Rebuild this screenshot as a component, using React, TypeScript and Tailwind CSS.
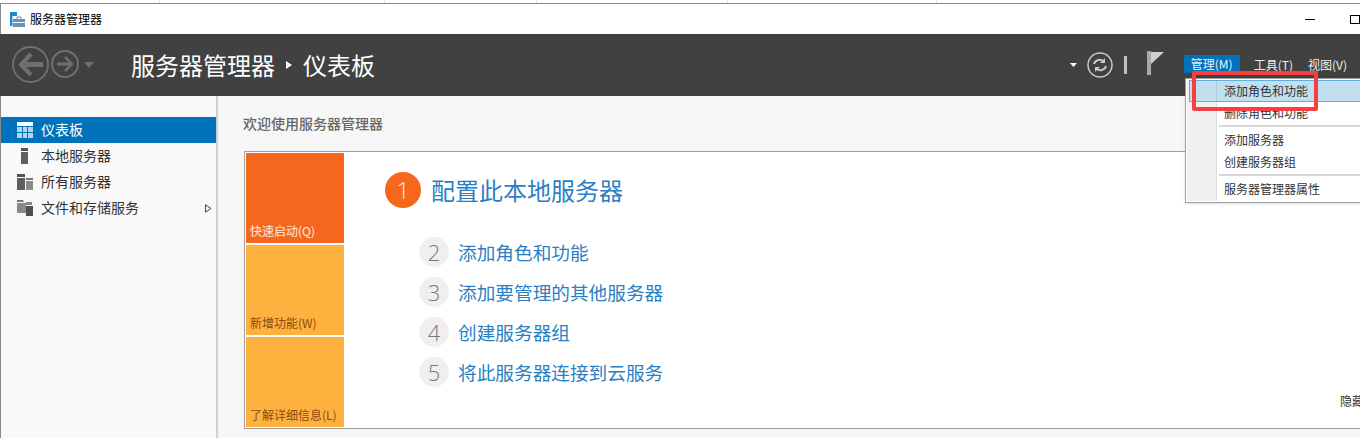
const sideItems = [
  { label: '仪表板', icon: 'dash', active: true },
  { label: '本地服务器', icon: 'local' },
  { label: '所有服务器', icon: 'all' },
  { label: '文件和存储服务', icon: 'files', arrow: true },
];

const steps = [
  { n: 2, label: '添加角色和功能' },
  { n: 3, label: '添加要管理的其他服务器' },
  { n: 4, label: '创建服务器组' },
  { n: 5, label: '将此服务器连接到云服务' },
];

const SideIcon = ({ name }: { name: string }) => {
  if (name === 'dash') {
    return (
      <svg width="16" height="16" viewBox="0 0 16 16" className="block">
        <rect x="0" y="0" width="16" height="4" fill="#ffffff" />
        <rect x="0" y="5" width="5" height="5" fill="#b5d5ec" />
        <rect x="6" y="5" width="4" height="5" fill="#b5d5ec" />
        <rect x="11" y="5" width="5" height="5" fill="#b5d5ec" />
        <rect x="0" y="11" width="5" height="5" fill="#b5d5ec" />
        <rect x="6" y="11" width="4" height="5" fill="#b5d5ec" />
        <rect x="11" y="11" width="5" height="5" fill="#b5d5ec" />
      </svg>
    );
  }
  if (name === 'local') {
    return (
      <svg width="16" height="16" viewBox="0 0 16 16" className="block">
        <rect x="4" y="0" width="7" height="3" fill="#555555" />
        <rect x="4" y="4" width="7" height="12" fill="#5f5f5f" />
      </svg>
    );
  }
  if (name === 'all') {
    return (
      <svg width="16" height="16" viewBox="0 0 16 16" className="block">
        <rect x="0" y="0" width="8" height="3" fill="#555555" />
        <rect x="0" y="4" width="8" height="12" fill="#5f5f5f" />
        <rect x="9" y="4" width="7" height="2" fill="#777777" />
        <rect x="9" y="7" width="7" height="9" fill="#8a8a8a" />
      </svg>
    );
  }
  return (
    <svg width="16" height="16" viewBox="0 0 16 16" className="block">
      <path d="M0 0h6l1 2h-7z" fill="#777777" />
      <rect x="0" y="3" width="9" height="10" fill="#8a8a8a" />
      <path d="M9 2h6v3h-6z" fill="#8a8a8a" />
      <rect x="9" y="6" width="7" height="10" fill="#505050" />
    </svg>
  );
};

const BackIcon = () => (
  <svg width="84" height="42" viewBox="0 0 84 42" className="block" fill="none" stroke="#6f6f6f">
    <circle cx="18.500" cy="20.500" r="17.500" strokeWidth="2" />
    <path d="M9 20.500h22" strokeWidth="5" />
    <path d="M19 10l-10 10.500 10 10.500" strokeWidth="4" />
    <circle cx="53" cy="20" r="13" strokeWidth="2" />
    <path d="M45 20h14" strokeWidth="3" />
    <path d="M53 13l7 7-7 7" strokeWidth="2.500" />
    <path d="M72 18h10l-5 6z" fill="#6f6f6f" stroke="none" />
  </svg>
);

const MenuItem = ({ label, hover }: { label: string; hover?: boolean }) => (
  <div className={hover ? 'ml-[3px] flex h-[22px] items-center border border-[#5fb0de] bg-[#c1dfee] pl-[34px]' : 'flex h-[22px] items-center pl-[38px]'}>
    {label}
  </div>
);

export default function App() {
  return (
    <div
      className="relative flex h-[438px] w-[1360px] flex-col overflow-hidden bg-white text-[12px] text-[#222222]"
      style={{ fontFamily: '"Noto Sans CJK SC", "Noto Sans", sans-serif' }}
    >
      {/* sliver of the page behind the window */}
      <div className="flex h-[3px] bg-white">
        <div className="w-[160px] border-r border-[#dddddd]" />
        <div className="w-[225px] border-r border-[#dddddd]" />
        <div className="w-[152px] border-r border-[#dddddd]" />
        <div className="w-[191px] border-r border-[#dddddd]" />
        <div className="w-[209px] border-r border-[#dddddd]" />
      </div>
      <div className="h-px bg-[#8a8a8a]" />

      {/* title bar */}
      <div className="flex h-[30px] items-center border-l border-[#8a8a8a] pl-[9px]">
        <svg width="15" height="15" viewBox="0 0 15 15" className="block">
          <rect x="0" y="0" width="7" height="4" fill="#1e88d6" />
          <rect x="0" y="4" width="2.500" height="10" fill="#1e88d6" />
          <rect x="3" y="7" width="12" height="8" fill="#6c93b5" />
          <path d="M7 7V5h4v2" fill="none" stroke="#6c93b5" />
          <rect x="3" y="10" width="12" height="1" fill="#ffffff" />
        </svg>
        <span className="ml-[5px] text-[12px] text-black">服务器管理器</span>
        <div className="ml-auto flex items-center">
          <div className="h-px w-[10px] bg-black" />
          <div className="ml-[35px] h-[9px] w-[10px] border border-black" />
        </div>
      </div>

      {/* header */}
      <div className="flex h-[62px] shrink-0 items-center bg-[#414141] pl-[12px] pr-[13px]">
        <BackIcon />
        <span className="ml-[35px] text-[24px] leading-none text-white">服务器管理器</span>
        <svg width="6" height="8" viewBox="0 0 6 8" className="ml-[11px] block">
          <path d="M0 0l6 4-6 4z" fill="#ffffff" />
        </svg>
        <span className="ml-[11px] text-[24px] leading-none text-white">仪表板</span>
        <div className="ml-auto flex items-center">
          <svg width="7" height="4" viewBox="0 0 7 4" className="block">
            <path d="M0 0h7l-3.500 4z" fill="#ffffff" />
          </svg>
          <svg width="26" height="26" viewBox="0 0 26 26" className="ml-[10px] block" fill="none" stroke="#c8c8c8">
            <circle cx="13" cy="13" r="12" strokeWidth="1.500" />
            <path d="M7 12c1-4 7-6 10-2" strokeWidth="2" />
            <path d="M19 14c-1 4-7 6-10 2" strokeWidth="2" />
            <path d="M18 6v5h-5z" fill="#c8c8c8" stroke="none" />
            <path d="M8 20v-5h5z" fill="#c8c8c8" stroke="none" />
          </svg>
          <div className="ml-[11px] h-[18px] w-[3px] bg-[#c0c0c0]" />
          <svg width="18" height="24" viewBox="0 0 18 24" className="mb-[5px] ml-[20px] block">
            <rect x="0" y="0" width="4" height="24" fill="#a8a8a8" />
            <path d="M4 1h13L4 13z" fill="#d0d0d0" />
          </svg>
          <div className="mb-[2px] ml-[19px] flex h-[18px] w-[56px] items-center justify-center bg-[#0072bc] text-[12px] leading-[18px] text-[#e8f2fa]">管理(M)</div>
          <span className="ml-[14px] text-[12px] leading-[18px] text-[#eeeeee]">工具(T)</span>
          <span className="ml-[15px] text-[12px] leading-[18px] text-[#eeeeee]">视图(V)</span>
        </div>
      </div>

      {/* body */}
      <div className="flex min-h-0 flex-1 border-l border-[#8a8a8a]">
        <aside className="w-[217px] shrink-0 border-r-2 border-[#d0d0d0] bg-[#f9f9f9] pt-[21px] text-[14px]">
          {sideItems.map((item) => (
            <div
              key={item.label}
              className={item.active ? 'flex h-[26px] items-center bg-[#0072bc] pl-[16px] text-white' : 'flex h-[26px] items-center pl-[16px] text-[#333333]'}
            >
              <SideIcon name={item.icon} />
              <span className="mb-px ml-[8px]">{item.label}</span>
              {item.arrow && (
                <svg width="7" height="9" viewBox="0 0 7 9" className="ml-auto mr-[4px] block">
                  <path d="M0.500 0.800l5.500 3.700-5.500 3.700z" fill="none" stroke="#444444" />
                </svg>
              )}
            </div>
          ))}
        </aside>

        <main className="min-w-0 flex-1 bg-[#f6f6f6] pl-[26px]">
          <div className="-ml-px flex h-[55px] items-center pb-px text-[14px] font-medium text-[#666666]">欢迎使用服务器管理器</div>
          <div className="flex h-[278px] w-[1200px] border border-[#a0a0a0] bg-white p-px">
            <div className="flex w-[98px] shrink-0 flex-col gap-[2px] text-[12px]">
              <div className="flex h-[90px] items-end bg-[#f6671e] pb-[3px] pl-[4px] text-[#fdeee2]">快速启动(Q)</div>
              <div className="flex h-[90px] items-end bg-[#ffb13f] pb-[3px] pl-[4px] text-[#8a4a0c]">新增功能(W)</div>
              <div className="flex h-[90px] items-end bg-[#ffb13f] pb-[3px] pl-[4px] text-[#8a4a0c]">了解详细信息(L)</div>
            </div>
            <div className="relative flex-1 pl-[41px] pt-[19px]">
              <div className="flex items-center">
                <div className="flex h-[36px] w-[36px] items-center justify-center rounded-full bg-[#f6671e] text-[24px] font-light leading-none text-[#fde6d6]" style={{ fontFamily: '"Open Sans", sans-serif' }}>1</div>
                <span className="ml-[10px] text-[24px] leading-none text-[#2a7fc4]">配置此本地服务器</span>
              </div>
              <div className="ml-[34px] mt-[24px] flex flex-col">
                {steps.map((s) => (
                  <div key={s.n} className="flex h-[40px] items-center">
                    <div className="flex h-[30px] w-[30px] items-center justify-center rounded-full bg-[#efefef] text-[22px] font-light leading-none text-[#777777]" style={{ fontFamily: '"Open Sans", sans-serif' }}>{s.n}</div>
                    <span className="ml-[9px] text-[18.670px] leading-none text-[#2a7fc4]">{s.label}</span>
                  </div>
                ))}
              </div>
              <span className="absolute left-[996px] top-[239px] text-[12px] text-[#333333]">隐藏欢迎屏幕</span>
            </div>
          </div>
        </main>
      </div>

      {/* open menu */}
      <div className="absolute left-[1185px] top-[78px] h-[125px] w-[190px] border border-[#a0a0a0] bg-white text-[12px] text-[#333333] shadow-sm">
        <div className="absolute bottom-[1px] left-[1px] top-[1px] w-[30px] border-r border-[#dddddd] bg-[#f0f0f0]" />
        <div className="relative pt-[1px]">
          <MenuItem label="添加角色和功能" hover />
          <MenuItem label="删除角色和功能" />
          <div className="ml-[33px] mt-[1px] h-[2px] bg-[#d8d8d8]" />
          <div className="mt-[2px]"><MenuItem label="添加服务器" /></div>
          <MenuItem label="创建服务器组" />
          <div className="ml-[33px] mt-[1px] h-[2px] bg-[#d8d8d8]" />
          <div className="mt-[2px]"><MenuItem label="服务器管理器属性" /></div>
        </div>
        <div className="absolute left-[30px] top-[2px] h-[20px] w-px bg-[#a9cfe4]" />
      </div>
      {/* red annotation */}
      <div className="absolute left-[1192px] top-[71px] h-[40px] w-[126px] rounded-[2px] border-[4px] border-[#f44040]" />
    </div>
  );
}
